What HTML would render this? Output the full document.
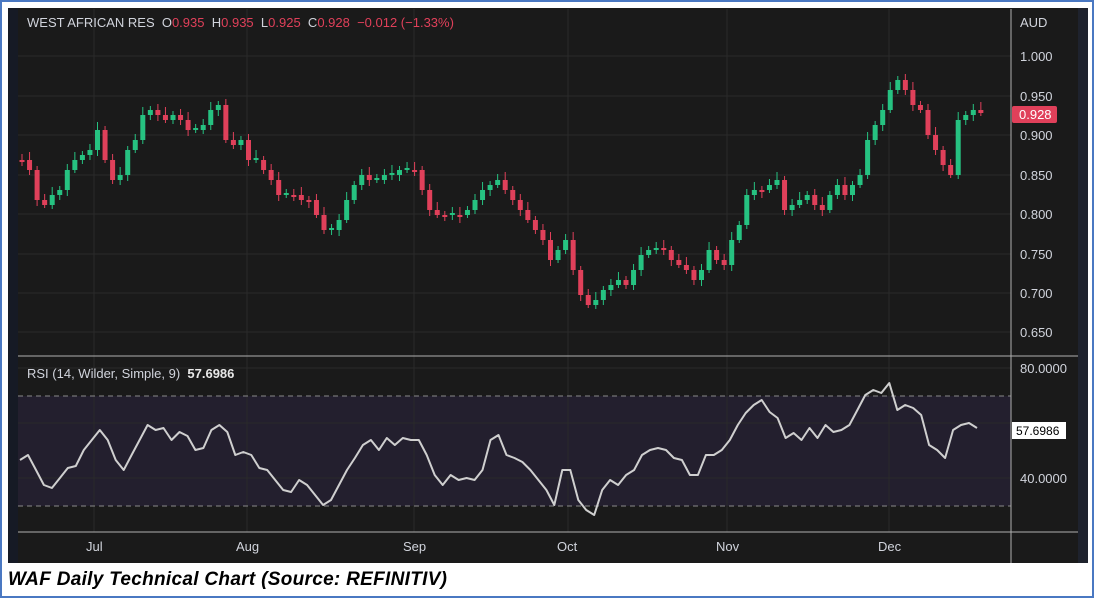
<!DOCTYPE html>
<html><head><meta charset="utf-8"><style>
html,body{margin:0;padding:0;background:#fff;}
body{width:1094px;height:598px;position:relative;overflow:hidden;font-family:"Liberation Sans",sans-serif;}
.frame{position:absolute;left:0;top:0;width:1090px;height:594px;border:2px solid #4a78c2;}
.cap{position:absolute;left:8px;top:569px;font-size:19px;font-weight:bold;font-style:italic;color:#000;letter-spacing:0.3px;}
</style></head><body>
<div class="frame"></div>
<svg id="c" width="1094" height="598" style="position:absolute;left:0;top:0" xmlns="http://www.w3.org/2000/svg">
<rect x="8" y="8" width="1080" height="555" fill="#161a25"/>
<rect x="18" y="8" width="1060" height="555" fill="#1a1a1a"/>
<rect x="1078" y="8" width="10" height="555" fill="#1e222d"/>
<rect x="18" y="396" width="993" height="110" fill="#231f2e"/>
<g stroke="#2a2a2a" stroke-width="1">
<line x1="18" x2="1011" y1="56" y2="56"/><line x1="18" x2="1011" y1="96" y2="96"/><line x1="18" x2="1011" y1="135" y2="135"/><line x1="18" x2="1011" y1="175" y2="175"/><line x1="18" x2="1011" y1="214" y2="214"/><line x1="18" x2="1011" y1="254" y2="254"/><line x1="18" x2="1011" y1="293" y2="293"/><line x1="18" x2="1011" y1="332" y2="332"/>
<line x1="18" x2="1011" y1="368" y2="368"/><line x1="18" x2="1011" y1="423" y2="423"/><line x1="18" x2="1011" y1="478" y2="478"/>
<line x1="94" x2="94" y1="9" y2="532"/><line x1="247" x2="247" y1="9" y2="532"/><line x1="414" x2="414" y1="9" y2="532"/><line x1="568" x2="568" y1="9" y2="532"/><line x1="727" x2="727" y1="9" y2="532"/><line x1="889" x2="889" y1="9" y2="532"/>
</g>
<g stroke="#8a8a8a" stroke-dasharray="5,4"><line x1="18" x2="1011" y1="396" y2="396"/><line x1="18" x2="1011" y1="506" y2="506"/></g>
<g stroke="#b0b0b0"><line x1="18" x2="1078" y1="356" y2="356"/><line x1="18" x2="1078" y1="532" y2="532"/><line x1="1011" x2="1011" y1="9" y2="563"/></g>
<g id="candles"></g>
<polyline id="rsi" fill="none" stroke="#cfcfcf" stroke-width="2" stroke-linejoin="round"/>
<g font-family="Liberation Sans,sans-serif" font-size="13" fill="#d1d4dc">
<text x="1020" y="27">AUD</text>
<text x="1020" y="61">1.000</text><text x="1020" y="101">0.950</text><text x="1020" y="140">0.900</text><text x="1020" y="180">0.850</text><text x="1020" y="219">0.800</text><text x="1020" y="259">0.750</text><text x="1020" y="298">0.700</text><text x="1020" y="337">0.650</text>
<text x="1020" y="373">80.0000</text><text x="1020" y="483">40.0000</text>
<text x="86" y="551">Jul</text><text x="236" y="551">Aug</text><text x="403" y="551">Sep</text><text x="557" y="551">Oct</text><text x="716" y="551">Nov</text><text x="878" y="551">Dec</text>
<text x="27" y="27" font-size="13" xml:space="preserve"><tspan>WEST AFRICAN RES  O</tspan><tspan fill="#e0405a">0.935</tspan><tspan>  H</tspan><tspan fill="#e0405a">0.935</tspan><tspan>  L</tspan><tspan fill="#e0405a">0.925</tspan><tspan>  C</tspan><tspan fill="#e0405a">0.928  −0.012 (−1.33%)</tspan></text>
<text x="27" y="378" xml:space="preserve">RSI (14, Wilder, Simple, 9)  <tspan font-weight="bold" fill="#e8e8e8">57.6986</tspan></text>
</g>
<rect x="1012" y="106" width="45" height="17" fill="#e0405a" rx="2"/>
<text x="1019" y="119" font-family="Liberation Sans,sans-serif" font-size="13" fill="#fff">0.928</text>
<rect x="1012" y="422" width="54" height="17" fill="#fff"/>
<text x="1016" y="435" font-family="Liberation Sans,sans-serif" font-size="12" fill="#000">57.6986</text>
</svg>
<div class="cap">WAF Daily Technical Chart (Source: REFINITIV)</div>
<script>
var ys=[160,160,170,200,205,195,190,170,160,155,150,130,160,180,175,150,140,115,110,115,120,115,120,130,130,125,110,105,140,145,140,160,160,170,180,195,195,195,200,200,215,230,230,220,200,185,175,180,180,175,175,170,170,170,190,210,215,215,215,215,210,200,190,185,180,190,200,210,220,230,240,260,250,240,270,295,305,300,290,285,280,285,270,255,250,248,250,260,265,270,280,270,250,260,265,240,225,195,190,190,185,180,210,205,200,195,205,210,195,185,195,185,175,140,125,110,90,80,90,105,110,135,150,165,175,120,115,110,113];
var g=document.getElementById('candles'),h='';
for(var i=1;i<ys.length;i++){var x=22+(i-1)*7.55,o=ys[i-1],c=ys[i];if(Math.abs(o-c)<2)c=o+(i%2?2:-2);
var up=c<o,col=up?'#26c281':'#e0405a',t=Math.min(o,c),b=Math.max(o,c);
h+='<line x1="'+x+'" x2="'+x+'" y1="'+(t-4-(i%3)*2)+'" y2="'+(b+3+(i%4))+'" stroke="'+col+'"/>';
h+='<rect x="'+(x-2.5)+'" y="'+t+'" width="5" height="'+Math.max(2,b-t)+'" fill="'+col+'"/>';}
g.innerHTML=h;
var r=[460,455,470,485,488,478,468,466,450,440,430,440,460,470,455,440,425,430,428,440,432,436,450,448,430,425,432,455,452,455,468,470,480,490,492,480,485,495,505,500,485,470,458,445,440,450,438,445,438,440,440,455,475,485,475,480,478,480,470,440,435,455,458,462,470,480,490,505,470,470,500,510,515,490,480,485,475,470,455,450,448,450,458,460,475,475,455,455,450,440,425,413,405,400,412,418,438,433,440,428,438,425,432,430,425,410,395,390,393,383,410,405,408,415,445,450,458,430,425,423,428];
var p=[];for(var j=0;j<r.length;j++)p.push((20+j*(957/(r.length-1))).toFixed(1)+','+r[j]);
document.getElementById('rsi').setAttribute('points',p.join(' '));
</script>
</body></html>
